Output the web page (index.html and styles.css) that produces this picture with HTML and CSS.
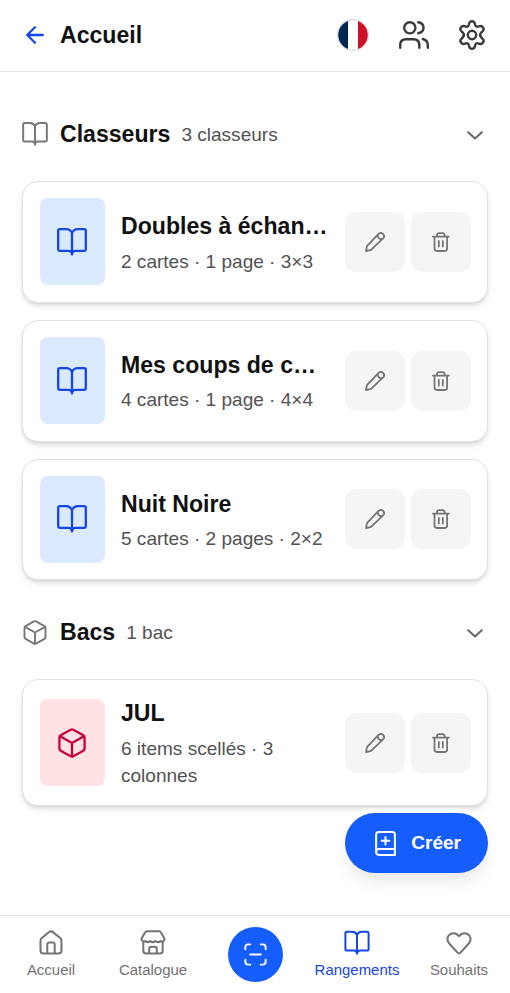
FILE: index.html
```html
<!DOCTYPE html>
<html lang="fr">
<head>
<meta charset="utf-8">
<meta name="viewport" content="width=device-width, initial-scale=1">
<title>Accueil</title>
<link rel="stylesheet" href="styles.css">
</head>
<body>
<svg class="sprite" aria-hidden="true">
  <symbol id="book" viewBox="0 0 30 28"><path d="M15 5.2C14 2.6 12 1.2 9.2 1.2H2.8Q1.2 1.2 1.2 2.8V21Q1.2 22.8 3 22.8H11.4C13.8 22.8 15 23.8 15 26.6C15 23.8 16.2 22.8 18.6 22.8H27Q28.8 22.8 28.8 21V2.8Q28.8 1.2 27.2 1.2H20.8C18 1.2 16 2.6 15 5.2ZM15 5.2V26.6"/></symbol>
  <symbol id="box" viewBox="0 0 28 30"><path d="M12.7 1.7Q14 1 15.3 1.7L25.3 7.3Q26.6 8 26.6 9.5V20.5Q26.6 22 25.3 22.7L15.3 28.3Q14 29 12.7 28.3L2.7 22.7Q1.4 22 1.4 20.5V9.5Q1.4 8 2.7 7.3ZM2 8.2 14 15 26 8.2M14 15V28.5"/></symbol>
  <symbol id="chevron" viewBox="0 0 16 9"><path d="m1.2 1.2 6.8 6.4 6.8-6.4"/></symbol>
  <symbol id="pencil" viewBox="0 0 20 20"><path d="M1 19 1.8 14.8Q2 14 2.6 13.4L13.6 1.9C16.6-.9 20.9 3.4 18.1 6.4L6.6 17.4Q6 18 5.2 18.2ZM13 2.8C12.2 5.5 14.5 7.8 17.2 7"/></symbol>
  <symbol id="trash" viewBox="0 0 18 20"><path d="M.9 4.6H16.9M2.5 4.6V16.6Q2.5 19 4.9 19H12.7Q15.1 19 15.1 16.6V4.6M5 4.4V3.3Q5 1.1 7.2 1.1H10.4Q12.6 1.1 12.6 3.3V4.4M6.8 9V14.6M10.8 9V14.6"/></symbol>
</svg>
<div class="app">
  <header class="topbar">
    <a class="back"><svg width="18" height="18" viewBox="0 0 18 18"><path d="M16.8 9H1.3M9 1.2 1.2 9 9 16.8"/></svg></a>
    <h1>Accueil</h1>
    <div class="tools">
      <svg class="flag" width="32" height="32" viewBox="0 0 32 32"><clipPath id="round"><circle cx="16" cy="16" r="15.3"/></clipPath><g clip-path="url(#round)" stroke="none"><path fill="#fff" d="M0 0H32V32H0Z"/><path fill="#002654" d="M0 0H11V32H0Z"/><path fill="#ce1126" d="M21 0H32V32H21Z"/></g><circle cx="16" cy="16" r="15.3"/></svg>
      <svg width="30" height="28" viewBox="0 0 30 28"><circle cx="10.8" cy="6.8" r="5.6"/><path d="M1.2 26.8V24Q1.2 18.2 7 18.2H14.5Q20.3 18.2 20.3 24V26.8M19.2 1.3C26.3 2.6 26.3 10.9 19.2 12.2M23.8 18C27.4 18.8 28.8 21 28.8 24V26.8"/></svg>
      <svg width="28" height="30" viewBox="0 0 28 30"><path d="M11.3 3.2C12 .5 16 .5 16.7 3.2L17.2 5C17.6 6.3 18.6 6.9 19.9 6.6L21.8 6.1C24.6 5.4 26.8 9.1 24.8 11L23.4 12.4C21.8 14 21.8 16 23.4 17.6L24.8 19C26.8 20.9 24.6 24.6 21.8 23.9L19.9 23.4C18.6 23.1 17.6 23.7 17.2 25L16.7 26.8C16 29.5 12 29.5 11.3 26.8L10.8 25C10.4 23.7 9.4 23.1 8.1 23.4L6.2 23.9C3.4 24.6 1.2 20.9 3.2 19L4.6 17.6C6.2 16 6.2 14 4.6 12.4L3.2 11C1.2 9.1 3.4 5.4 6.2 6.1L8.1 6.6C9.4 6.9 10.4 6.3 10.8 5Z"/><circle cx="14" cy="15" r="4.2"/></svg>
    </div>
  </header>

  <main>
    <section>
      <div class="section-head">
        <svg class="head-icon" width="26" height="24"><use href="#book"/></svg>
        <h2>Classeurs</h2><span class="count">3 classeurs</span>
        <svg class="chevron" width="16" height="9"><use href="#chevron"/></svg>
      </div>
      <div class="cards">
        <article class="card">
          <div class="tile blue"><svg width="30" height="28"><use href="#book"/></svg></div>
          <div class="info"><h3>Doubles à échan…</h3><p>2 cartes · 1 page · 3×3</p></div>
          <div class="actions"><button aria-label="Modifier"><svg width="20" height="20"><use href="#pencil"/></svg></button><button aria-label="Supprimer"><svg width="18" height="20"><use href="#trash"/></svg></button></div>
        </article>
        <article class="card">
          <div class="tile blue"><svg width="30" height="28"><use href="#book"/></svg></div>
          <div class="info"><h3>Mes coups de c…</h3><p>4 cartes · 1 page · 4×4</p></div>
          <div class="actions"><button aria-label="Modifier"><svg width="20" height="20"><use href="#pencil"/></svg></button><button aria-label="Supprimer"><svg width="18" height="20"><use href="#trash"/></svg></button></div>
        </article>
        <article class="card">
          <div class="tile blue"><svg width="30" height="28"><use href="#book"/></svg></div>
          <div class="info"><h3>Nuit Noire</h3><p>5 cartes · 2 pages · 2×2</p></div>
          <div class="actions"><button aria-label="Modifier"><svg width="20" height="20"><use href="#pencil"/></svg></button><button aria-label="Supprimer"><svg width="18" height="20"><use href="#trash"/></svg></button></div>
        </article>
      </div>
    </section>

    <section>
      <div class="section-head">
        <svg class="head-icon" width="26" height="25"><use href="#box"/></svg>
        <h2>Bacs</h2><span class="count">1 bac</span>
        <svg class="chevron" width="16" height="9"><use href="#chevron"/></svg>
      </div>
      <div class="cards">
        <article class="card">
          <div class="tile rose"><svg width="28" height="30"><use href="#box"/></svg></div>
          <div class="info"><h3>JUL</h3><p>6 items scellés · 3 colonnes</p></div>
          <div class="actions"><button aria-label="Modifier"><svg width="20" height="20"><use href="#pencil"/></svg></button><button aria-label="Supprimer"><svg width="18" height="20"><use href="#trash"/></svg></button></div>
        </article>
      </div>
    </section>
  </main>

  <button class="create"><svg width="21" height="25" viewBox="0 0 21 25"><path d="M1.1 21V3.9Q1.1 1.1 3.9 1.1H17.4Q19.9 1.1 19.9 3.6V23.9H3.9Q1.1 23.9 1.1 21.1Q1.1 18 4.1 18H19.9M10.5 6V13.6M6.7 9.8H14.3"/></svg>Créer</button>

  <nav class="tabs">
    <a><svg width="24" height="25" viewBox="0 0 24 25"><path d="M1.5 10.8Q1.5 9.2 2.8 8.1L10.1 2.1Q12 .6 13.9 2.1L21.2 8.1Q22.5 9.2 22.5 10.8V20.4Q22.5 23.4 19.5 23.4H4.5Q1.5 23.4 1.5 20.4ZM8.3 23V14.8Q8.3 12.6 10.4 12.6H13.6Q15.7 12.6 15.7 14.8V23"/></svg><span>Accueil</span></a>
    <a><svg width="26" height="25" viewBox="0 0 26 25"><path d="M5 2.5Q5.6 1.3 7 1.3H19Q20.4 1.3 21 2.5L24.3 8.2C25.3 10.4 22.6 12.5 20.6 11.1Q18 13.2 15.6 11.1Q13 13.2 10.4 11.1Q8 13.2 5.4 11.1C3.4 12.5 .7 10.4 1.7 8.2ZM3.3 11.8V20.7Q3.3 23.5 6.1 23.5H19.9Q22.7 23.5 22.7 20.7V11.8M9.2 23V19Q9.2 16.8 11.4 16.8H14.6Q16.8 16.8 16.8 19V23"/></svg><span>Catalogue</span></a>
    <a class="scan" aria-label="Scanner"><svg width="23" height="23" viewBox="0 0 24 24"><path d="M1.4 6.5V4.4Q1.4 1.4 4.4 1.4H6.5M17.5 1.4H19.6Q22.6 1.4 22.6 4.4V6.5M22.6 17.5V19.6Q22.6 22.6 19.6 22.6H17.5M6.5 22.6H4.4Q1.4 22.6 1.4 19.6V17.5M6.5 12H17.5"/></svg></a>
    <a class="active"><svg width="26" height="25" viewBox="0 0 26 25"><path d="M13 5C12.2 2.8 10.4 1.8 8 1.8H2.8Q1.4 1.8 1.4 3.2V19Q1.4 20.6 3 20.6H9.8C12 20.6 13 21.5 13 23.8C13 21.5 14 20.6 16.2 20.6H23Q24.6 20.6 24.6 19V3.2Q24.6 1.8 23.2 1.8H18C15.6 1.8 13.8 2.8 13 5ZM13 5V23.8"/></svg><span>Rangements</span></a>
    <a><svg width="26" height="25" viewBox="0 0 26 25"><path d="M2.8 13C.4 10 1.2 5.6 4.5 4C7.6 2.5 10.9 3.5 13 6.2C15.1 3.5 18.4 2.5 21.5 4C24.8 5.6 25.6 10 23.2 13L14.5 22.6Q13 24.1 11.5 22.6Z"/></svg><span>Souhaits</span></a>
  </nav>
</div>
</body>
</html>
```
FILE: styles.css
```css
* { box-sizing: border-box; }
body { margin: 0; background: #fff; color: #111; font-family: "Liberation Sans", Arial, sans-serif; }
.sprite { position: absolute; width: 0; height: 0; }
svg { display: block; flex: none; fill: none; stroke: currentColor; stroke-width: 2.3; stroke-linecap: round; stroke-linejoin: round; overflow: visible; }
h1, h2, h3, p { margin: 0; }
button { border: 0; font-family: inherit; }
.app { position: relative; height: 993px; overflow: hidden; display: flex; flex-direction: column; }

.topbar { height: 72px; flex: none; display: flex; align-items: center; padding: 0 24px 1px 26px; border-bottom: 1.5px solid #e4e4e4; }
.back { color: #1447e6; }
.topbar h1 { margin-left: 16px; font-size: 23.1px; line-height: 32px; }
.tools { margin-left: auto; display: flex; align-items: center; gap: 29.5px; color: #3a3a3c; }
.tools svg { stroke-width: 2.4; }
.tools .flag { stroke: #d8d8dc; stroke-width: 1.2; }

main { flex: 1; min-height: 0; padding: 38px 22px 0; }
.section-head { height: 48px; display: flex; align-items: center; }
.head-icon { color: #777; stroke-width: 2.3; }
.section-head h2 { margin-left: 12px; font-size: 23.1px; line-height: 32px; }
.count { margin: 1px 0 0 11px; font-size: 19.04px; color: #525252; }
.chevron { margin: 2px 5px 0 auto; color: #666; stroke-width: 2; }
section + section { margin-top: 28px; }
.cards { margin-top: 23px; display: flex; flex-direction: column; gap: 17px; }
.card { min-height: 121.8px; display: flex; align-items: center; padding: 16px 16.5px; border: 1.3px solid #e2e2e2; border-radius: 16px; background: #fff; box-shadow: 0 4px 6px -1px rgba(0,0,0,.12), 0 2px 4px -2px rgba(0,0,0,.12); }
.tile { width: 65px; height: 87px; flex: none; border-radius: 8px; display: flex; align-items: center; justify-content: center; }
.blue { background: #dbe9fe; color: #1447e6; }
.rose { background: #ffe2e4; color: #c70036; }
.info { flex: 1; min-width: 0; margin: 0 12px 0 16.5px; }
.info h3 { font-size: 23.1px; line-height: 35px; white-space: nowrap; }
.info p { margin-top: 3.5px; font-size: 19.04px; line-height: 27.2px; color: #525252; }
.actions { display: flex; gap: 5.5px; }
.actions button { width: 60px; height: 60px; padding: 0; border-radius: 11px; background: #f5f5f5; color: #757575; display: flex; align-items: center; justify-content: center; }
.actions svg { stroke-width: 1.8; }

.create { position: absolute; right: 22px; bottom: 120px; width: 143px; height: 60px; padding: 0 27px 0 30px; border-radius: 30px; background: #155dfc; color: #fff; display: flex; align-items: center; justify-content: space-between; font-size: 19.04px; font-weight: 700; box-shadow: 0 10px 18px -3px rgba(0,0,0,.1), 0 0 0 5px rgba(255,255,255,.5); }
.create svg { stroke-width: 2; }

.tabs { height: 78px; flex: none; display: grid; grid-template-columns: repeat(5, 102px); border-top: 1.5px solid #e4e4e4; background: #fff; color: #737373; }
.tabs a { display: flex; flex-direction: column; align-items: center; padding-top: 14px; font-size: 14.96px; line-height: 20px; }
.tabs a span { margin-top: 5px; }
.tabs svg { stroke-width: 2; }
.tabs .active { color: #1447e6; }
.tabs .scan { width: 55px; height: 55px; margin: 11px auto 0; padding: 0; justify-content: center; border-radius: 50%; background: #155dfc; color: #fff; }
```
